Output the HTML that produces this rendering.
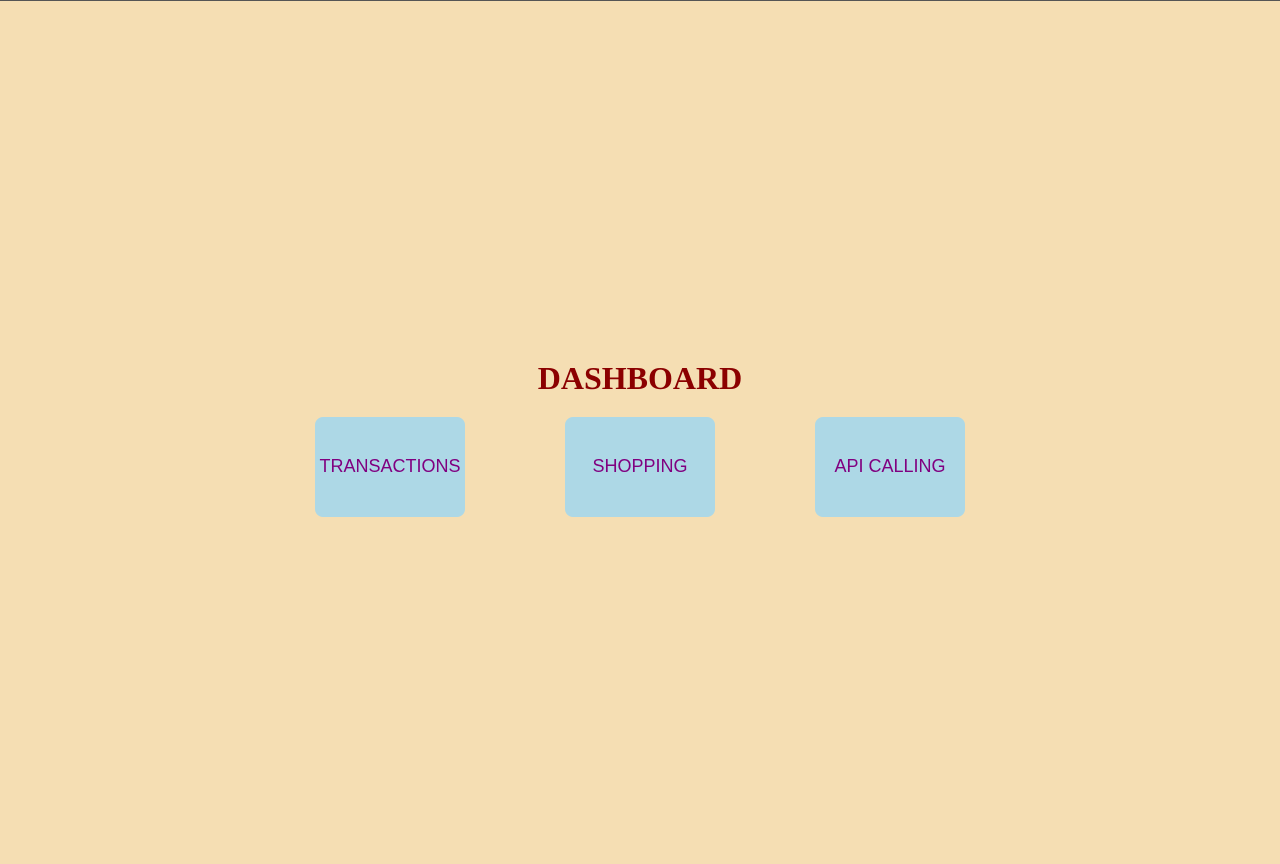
<!DOCTYPE html>
<html><head><style>
html,body{margin:0;padding:0}
body{width:1280px;height:864px;background:#f5deb3;border-top:1px solid #555;box-sizing:border-box;position:relative;overflow:hidden}
h1{position:absolute;top:356px;left:0;width:1280px;margin:0;text-align:center;font:bold 32px "Liberation Serif",serif;color:#8b0000;line-height:42px}
.b{position:absolute;top:416px;width:150px;height:100px;box-sizing:border-box;padding-bottom:2px;background:#add8e6;border-radius:8px;display:flex;align-items:center;justify-content:center;font:18px "Liberation Sans",sans-serif;color:#800080;white-space:nowrap}
</style></head><body>
<h1>DASHBOARD</h1>
<div class="b" style="left:315px">TRANSACTIONS</div>
<div class="b" style="left:565px">SHOPPING</div>
<div class="b" style="left:815px">API CALLING</div>
</body></html>
